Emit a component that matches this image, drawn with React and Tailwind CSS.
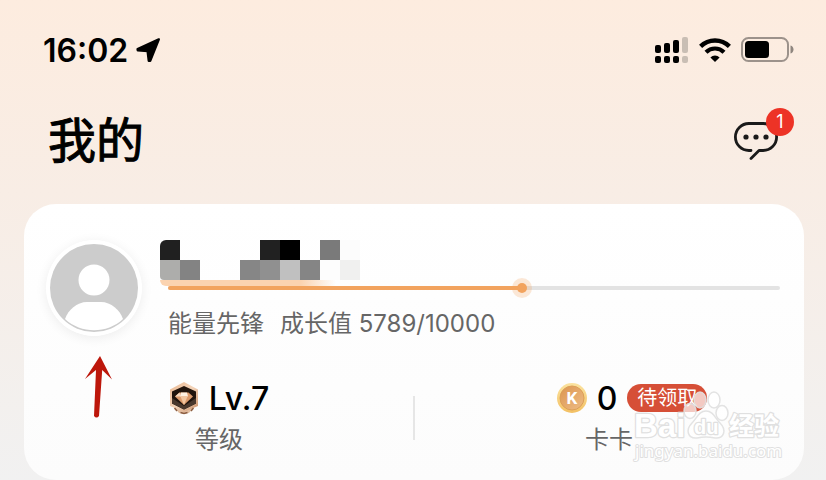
import React from 'react'

const user = { rank: '能量先锋', growth: 5789, target: 10000, level: 'Lv.7', coins: 0, messages: 1 }

// The hidden nickname, one class per tile
const nameTiles = [
  'bg-[#202020] rounded-tl-md', '', '', '', '', 'bg-[#212121]', 'bg-black', '', 'bg-[#7a7a7a]', 'bg-[#fcfcfc]',
  'bg-[#adadab] rounded-bl-sm', 'bg-[#838383]', '', '', 'bg-[#868686]', 'bg-[#909090]', 'bg-[#c0c0c0]', 'bg-[#858585]', 'bg-[#fdfdfd]', 'bg-[#f0f0ef]',
]

const LocationIcon = () => (
  <svg className="w-[26px] h-[26px]" viewBox="0 0 26 26">
    <path d="M22.800 2.400 L1.600 12.200 L1.800 13.400 L11.600 14 L12.800 23.800 L14.200 23.800 Z" fill="#000" stroke="#000" strokeWidth="2.4" strokeLinejoin="round" />
  </svg>
)

const SignalIcon = () => (
  <svg className="w-[34px] h-[28px]" viewBox="0 0 34 28">
    <g fill="#000">
      <rect x="0" y="9" width="6" height="8" rx="2" />
      <rect x="9" y="7" width="6" height="10" rx="2" />
      <rect x="18" y="4" width="6" height="13" rx="2" />
      <rect x="0" y="20" width="6" height="7" rx="2" />
      <rect x="9" y="20" width="6" height="7" rx="2" />
      <rect x="18" y="20" width="6" height="7" rx="2" />
    </g>
    <g fill="#c9beb4">
      <rect x="27" y="1" width="6" height="16" rx="2" />
      <rect x="27" y="20" width="6" height="7" rx="2" />
    </g>
  </svg>
)

const WifiIcon = () => (
  <svg className="w-8 h-6" viewBox="0 0 32 24" fill="none" stroke="#000">
    <path d="M1.6 8.4 A20.5 20.5 0 0 1 30.4 8.4" strokeWidth="4.4" />
    <path d="M7 14.2 A12.8 12.8 0 0 1 25 14.2" strokeWidth="4.2" />
    <path d="M16 24 L11.4 19.4 A6.6 6.6 0 0 1 20.6 19.4 Z" fill="#000" stroke="none" />
  </svg>
)

const BatteryIcon = () => (
  <svg className="w-[53px] h-[26px]" viewBox="0 0 53 26">
    <rect x="1" y="1" width="46" height="23" rx="6.5" fill="none" stroke="#9c928b" strokeWidth="2" />
    <rect x="4" y="4" width="24" height="17" rx="3.5" fill="#000" />
    <path d="M49.500 8.500 C53.500 9.500 53.500 15.500 49.500 16.500 Z" fill="#8f867f" />
  </svg>
)

const ChatIcon = () => (
  <svg className="w-[44px] h-[40px]" viewBox="0 0 44 40">
    <path
      d="M17 30.500 H14.900 A13.500 13.500 0 0 1 14.900 3.500 H29.100 A13.500 13.500 0 0 1 29.100 30.500 H25 L17 38.500"
      fill="none" stroke="#1a1a1a" strokeWidth="2.8" strokeLinecap="round" strokeLinejoin="round"
    />
    <g fill="#1a1a1a">
      <circle cx="12" cy="17" r="2.600" />
      <circle cx="22" cy="17" r="2.600" />
      <circle cx="32" cy="17" r="2.600" />
    </g>
  </svg>
)

const Avatar = () => (
  <svg className="w-24 h-24 rounded-full shadow-[0_2px_12px_rgba(0,0,0,0.07)]" viewBox="0 0 96 96">
    <circle cx="48" cy="48" r="48" fill="#fff" />
    <circle cx="48" cy="48" r="44" fill="#ccc" />
    <circle cx="48" cy="40" r="15.500" fill="#fff" />
    <path d="M19 79 C22 70 31 62 41 62 H55 C65 62 74 70 77 79 C61 94 35 94 19 79 Z" fill="#fff" />
  </svg>
)

const LevelIcon = () => (
  <svg className="w-[30px] h-[34px]" viewBox="0 0 30 34">
    <defs>
      <linearGradient id="levelRim" x1="0" y1="0" x2="1" y2="1">
        <stop offset="0" stopColor="#e9b892" />
        <stop offset="0.5" stopColor="#f3d3b8" />
        <stop offset="1" stopColor="#c88f69" />
      </linearGradient>
    </defs>
    <path d="M6 27 L10 32 L15 33 L20 32 L24 27 Z" fill="#e2bfa2" />
    <path d="M15 1 L29 8.500 V25 L15 31 L1 25 V8.500 Z" fill="url(#levelRim)" />
    <path d="M15 5 L27 10.500 V22.500 L15 28.500 L3 22.500 V10.500 Z" fill="#21140d" />
    <path d="M3 17 L15 25 L27 17 V22.500 L15 28.500 L3 22.500 Z" fill="#4a382d" />
    <path d="M10.500 11.500 H19.500 L24 15.500 L15 24 L6 15.500 Z" fill="#dc9a6c" />
    <path d="M10.500 11.500 L11.500 15.500 H6 Z" fill="#f6d9bf" />
    <path d="M12 11.500 H18 L19 15.500 H11 Z" fill="#fff1e2" />
    <path d="M11.500 15.500 H18.500 L15 24 Z" fill="#f3c6a0" />
    <path d="M5.500 27 L8 30 M24.500 27 L22 30 M11.500 31.500 L15 32.500 L18.500 31.500" stroke="#8a5c40" strokeWidth="1.500" fill="none" />
  </svg>
)

const CoinIcon = () => (
  <svg className="w-[30px] h-[30px]" viewBox="0 0 30 30">
    <defs>
      <linearGradient id="coinRim" x1="0" y1="0" x2="0" y2="1">
        <stop offset="0" stopColor="#fbe3a0" />
        <stop offset="1" stopColor="#f3c063" />
      </linearGradient>
      <linearGradient id="coinFace" x1="0" y1="0" x2="1" y2="1">
        <stop offset="0" stopColor="#dc9550" />
        <stop offset="1" stopColor="#eebd86" />
      </linearGradient>
    </defs>
    <circle cx="15" cy="15" r="15" fill="url(#coinRim)" />
    <circle cx="15" cy="15" r="12" fill="url(#coinFace)" stroke="#dc9f58" strokeWidth="1" />
    <text x="15" y="21" textAnchor="middle" fontFamily="Roboto, sans-serif" fontWeight="700" fontSize="17" fill="#fff">K</text>
  </svg>
)

const Arrow = () => (
  <svg className="absolute left-[84px] top-[355px] w-[30px] h-[64px]" viewBox="0 0 30 64">
    <path d="M16 1 L28 24.500 L18.200 15 L15 61 Q12.500 64 10 61 L12 15 L1 24 Z" fill="#bd170b" />
  </svg>
)

const Watermark = () => (
  <svg className="absolute right-5 bottom-2 w-[154px] h-[82px]" viewBox="0 0 154 82">
    <g fill="#fff" fillOpacity="0.7" stroke="#e0e0e0" strokeOpacity="0.9" strokeWidth="1.500">
      <ellipse cx="70" cy="10" rx="6" ry="8" />
      <ellipse cx="84" cy="10" rx="6" ry="8" />
      <ellipse cx="60" cy="21" rx="6" ry="7.500" />
      <ellipse cx="92" cy="23" rx="6" ry="7.500" />
      <path d="M76 21 C83 21 85 28 90 33 C97 40 94 49 85 48 C80 47 72 47 67 48 C58 49 55 40 62 33 C67 28 69 21 76 21 Z" />
    </g>
    <g fill="#fff" stroke="#e0e0e0" strokeWidth="2.500" strokeLinejoin="round" paintOrder="stroke" fontWeight="700">
      <text x="4" y="47" fontFamily="Liberation Sans, sans-serif" fontSize="33">Bai</text>
      <text x="64" y="44" fontFamily="Liberation Sans, sans-serif" fontSize="20">du</text>
      <text x="99" y="45" fontFamily="Noto Sans CJK SC, sans-serif" fontSize="25">经验</text>
    </g>
    <text x="5" y="67" fontFamily="Noto Sans, sans-serif" fontSize="17" fill="#fff" stroke="#e0e0e0" strokeWidth="2" strokeLinejoin="round" paintOrder="stroke">
      jingyan.baidu.com
    </text>
  </svg>
)

const Progress = ({ value, max }) => {
  const percent = `${(value / max) * 100}%`
  return (
    <div role="progressbar" aria-label="成长值" aria-valuenow={value} aria-valuemax={max} className="relative h-1 rounded-full bg-[#e3e3e3]">
      <div className="h-1 rounded-full bg-[#f2a35e]" style={{ width: percent }} />
      <div className="absolute top-1/2 size-5 -translate-1/2 rounded-full bg-[#f2a35e]/25 flex items-center justify-center" style={{ left: percent }}>
        <div className="size-[10px] rounded-full bg-[#f2a35e]" />
      </div>
    </div>
  )
}

const App = () => {
  return (
    <div className="relative min-h-screen bg-linear-to-b from-[#fdecdf] via-[#f8ede5] via-40% to-[#f1f1f1] font-['Inter','Noto_Sans_CJK_SC',sans-serif] text-black">
      <header className="flex items-center justify-between h-[100px] pl-[43px] pr-8">
        <div className="flex items-center gap-2 text-[32px] leading-10 font-semibold">
          <span className="pt-[2px]">16:02</span>
          <LocationIcon />
        </div>
        <div className="flex items-center gap-[10px]">
          <SignalIcon />
          <WifiIcon />
          <BatteryIcon />
        </div>
      </header>

      <div className="flex items-center justify-between h-[104px] pl-12 pr-12 pb-6">
        <h1 className="pt-[2px] text-[48px] leading-[72px] font-normal [-webkit-text-stroke:1px_black]">我的</h1>
        <button type="button" aria-label="消息" className="relative">
          <ChatIcon />
          <span className="absolute -top-3 -right-4 size-7 rounded-full bg-[#ed3326] text-white text-[18px] leading-7 text-center">
            {user.messages}
          </span>
        </button>
      </div>

      <main className="relative ml-6 mr-[22px] rounded-[32px] bg-linear-to-b from-white to-[#fcfcfc] pt-9 pb-[18px]">
        <section className="flex pl-[22px] pr-6">
          <Avatar />
          <div className="flex-1 ml-[26px]">
            <div className="grid grid-cols-10 w-[200px] -ml-2">
              {nameTiles.map((tile, i) => (
                <div key={i} className={`h-5 ${tile}`} />
              ))}
            </div>
            <div className="h-[6px] w-[176px] -ml-2 rounded-bl-full bg-linear-to-r from-[#fbd3b0] via-[#fbd3b0] via-80% to-[#fbd3b0]/0" />
            <Progress value={user.growth} max={user.target} />
            <p className="mt-4 flex gap-4 text-[24px] leading-9 text-[#666]">
              <span>{user.rank}</span>
              <span>成长值 {user.growth}/{user.target}</span>
            </p>
          </div>
        </section>

        <section className="relative mt-9 grid grid-cols-2">
          <div className="flex flex-col items-center">
            <div className="flex items-center gap-[10px] h-10 text-[32px] font-medium">
              <LevelIcon />
              <span className="pt-[2px]">{user.level}</span>
            </div>
            <p className="text-[24px] leading-11 text-[#666]">等级</p>
          </div>
          <div className="flex flex-col items-center">
            <div className="flex items-center gap-[10px] h-10 pl-[46px] text-[32px] font-medium">
              <CoinIcon />
              <span className="pt-[2px]">{user.coins}</span>
              <button type="button" className="h-7 px-[10px] rounded-full bg-[#d64f37] text-white text-[20px] leading-7 font-normal">待领取</button>
            </div>
            <p className="text-[24px] leading-11 text-[#666]">卡卡</p>
          </div>
          <div className="absolute left-1/2 top-[18px] w-[2px] h-11 -ml-px bg-[#e6e6e6]" />
        </section>
        <Watermark />
      </main>
      <Arrow />
    </div>
  )
}

export default App
